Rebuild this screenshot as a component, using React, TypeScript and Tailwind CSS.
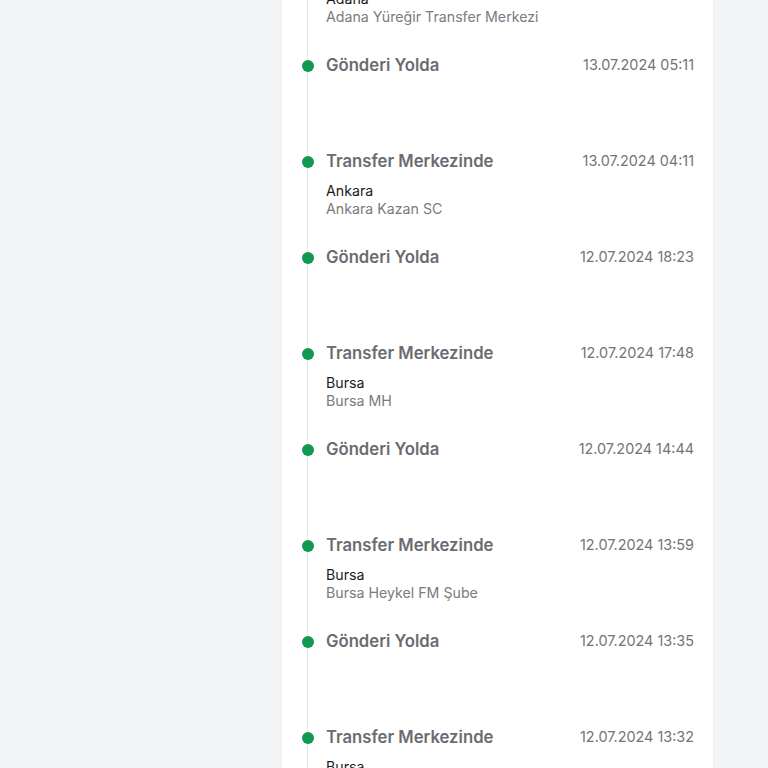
import React from "react";

interface Step {
  id: number;
  title: string;
  date: string;
  city?: string;
  place?: string;
}

const STEPS: Step[] = [
  { id: 1, title: "Transfer Merkezinde", date: "13.07.2024 08:02", city: "Adana", place: "Adana Yüreğir Transfer Merkezi" },
  { id: 2, title: "Gönderi Yolda", date: "13.07.2024 05:11" },
  { id: 3, title: "Transfer Merkezinde", date: "13.07.2024 04:11", city: "Ankara", place: "Ankara Kazan SC" },
  { id: 4, title: "Gönderi Yolda", date: "12.07.2024 18:23" },
  { id: 5, title: "Transfer Merkezinde", date: "12.07.2024 17:48", city: "Bursa", place: "Bursa MH" },
  { id: 6, title: "Gönderi Yolda", date: "12.07.2024 14:44" },
  { id: 7, title: "Transfer Merkezinde", date: "12.07.2024 13:59", city: "Bursa", place: "Bursa Heykel FM Şube" },
  { id: 8, title: "Gönderi Yolda", date: "12.07.2024 13:35" },
  { id: 9, title: "Transfer Merkezinde", date: "12.07.2024 13:32", city: "Bursa", place: "Bursa Heykel FM Şube" },
];

function TimelineRow({ step }: { step: Step }) {
  return (
    <div className="flex h-24 shrink-0 gap-3">
      <div className="relative w-3 shrink-0">
        <div className="absolute inset-y-0 left-[5px] w-px bg-[#e4e4e7]" />
        <div className="relative mt-[6px] h-3 w-3 rounded-full bg-[#12994f]" />
      </div>
      <div className="flex-1">
        <div className="flex h-6 items-center justify-between">
          <span className="text-[16.7px] font-semibold text-[#6b6b70]">
            {step.title}
          </span>
          <span className="-mt-[3px] text-[14.4px] text-[#737378]">{step.date}</span>
        </div>
        {step.city && (
          <div className="mt-2 text-[14.2px] leading-[18px]">
            <div className="text-[#1a1a1a]">{step.city}</div>
            <div className="text-[#7a7a80]">{step.place}</div>
          </div>
        )}
      </div>
    </div>
  );
}

export default function App() {
  return (
    <div
      className="h-[768px] overflow-hidden bg-[#f3f4f6]"
      style={{ fontFamily: "Inter, 'Noto Sans', sans-serif" }}
    >
      <div className="ml-[282px] flex h-full w-[431px] flex-col overflow-hidden bg-white pl-5 pr-[19px] shadow-[0_0_3px_rgba(0,0,0,0.06)]">
        <div className="-mt-[42px] flex flex-col">
          {STEPS.map((step) => (
            <TimelineRow key={step.id} step={step} />
          ))}
        </div>
      </div>
    </div>
  );
}
